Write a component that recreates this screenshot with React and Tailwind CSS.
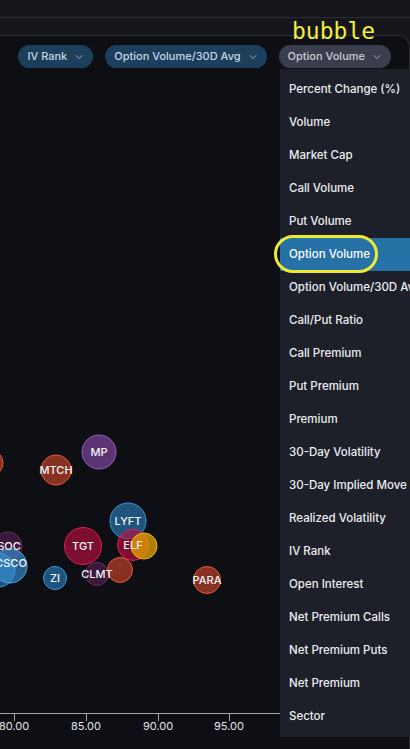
import React from 'react';
import { ChevronDown } from 'lucide-react';

const metrics = [
  'Percent Change (%)',
  'Volume',
  'Market Cap',
  'Call Volume',
  'Put Volume',
  'Option Volume',
  'Option Volume/30D Avg',
  'Call/Put Ratio',
  'Call Premium',
  'Put Premium',
  'Premium',
  '30-Day Volatility',
  '30-Day Implied Move',
  'Realized Volatility',
  'IV Rank',
  'Open Interest',
  'Net Premium Calls',
  'Net Premium Puts',
  'Net Premium',
  'Sector',
];

const palette = {
  orange: { fill: '#d9482b', op: 0.6, stroke: '#ea5a35' },
  purple: { fill: '#8e4fb0', op: 0.6, stroke: '#9c5bc0' },
  blue: { fill: '#2a7ab8', op: 0.65, stroke: '#3c95d8' },
  crimson: { fill: '#b8103f', op: 0.65, stroke: '#e01d55' },
  yellow: { fill: '#e5a500', op: 0.75, stroke: '#f0b800' },
  plum: { fill: '#5a1f55', op: 0.6, stroke: '#6a2a60' },
  sky: { fill: '#3a9ae0', op: 0.6, stroke: '#4aa8e8' },
};

// page coordinates (svg viewBox is offset to match)
const bubbles = [
  { x: -10, y: 463, r: 13, c: 'orange' },
  { x: 99, y: 452, r: 17, c: 'purple', label: 'MP' },
  { x: 56, y: 470, r: 15, c: 'orange', label: 'MTCH' },
  { x: 128, y: 521, r: 18, c: 'blue', label: 'LYFT' },
  { x: 83, y: 546, r: 18.5, c: 'crimson', label: 'TGT' },
  { x: 133, y: 545, r: 15.5, c: 'crimson', label: 'ELF' },
  { x: 144, y: 546, r: 13, c: 'yellow' },
  { x: 97, y: 574, r: 11.5, c: 'plum', label: 'CLMT' },
  { x: 120, y: 570, r: 12.5, c: 'orange' },
  { x: 55, y: 578, r: 11.5, c: 'blue', label: 'ZI' },
  { x: 207, y: 580, r: 13.5, c: 'orange', label: 'PARA' },
  { x: 8, y: 546, r: 14, c: 'plum', label: 'SOC', lx: 9 },
  { x: -2, y: 570, r: 17, c: 'blue' },
  { x: 10, y: 566, r: 17, c: 'sky', label: 'CSCO', lx: 11, ly: 563 },
];

const ticks = [
  { x: 14, t: '80.00' },
  { x: 86, t: '85.00' },
  { x: 158, t: '90.00' },
  { x: 229, t: '95.00' },
];

function Pill({ label, gray }) {
  return (
    <div
      className={`flex h-[23px] shrink-0 items-center gap-[6px] whitespace-nowrap rounded-full pl-[9px] pr-[8px] text-[11px] font-medium ${
        gray ? 'bg-[#3b3e4d] text-[#c9ccd6]' : 'bg-[#1c3f5c] text-[#c6d5e4]'
      }`}
    >
      <span>{label}</span>
      <ChevronDown size={12} strokeWidth={2} className="shrink-0 text-[#a3adb8]" />
    </div>
  );
}

export default function App() {
  return (
    <div className="relative h-[749px] w-[410px] overflow-hidden bg-[#15161b] font-['Inter',sans-serif]">
      <div className="h-[18px] border-b border-[#2c2d33]" />
      <div className="h-[17px]" />
      <div className="relative h-[714px] rounded-tr-[12px] border-t border-r border-[#2c2d33] bg-[#0e0f14]">
        <div className="flex justify-end gap-3 pr-[18px] pt-[9px]">
          <Pill label="IV Rank" />
          <Pill label="Option Volume/30D Avg" />
          <Pill label="Option Volume" gray />
        </div>

        <svg width="410" height="681" viewBox="0 68 410 681" className="block">
          {bubbles.map((b, i) => {
            const p = palette[b.c];
            return (
              <circle
                key={i}
                cx={b.x}
                cy={b.y}
                r={b.r}
                fill={p.fill}
                fillOpacity={p.op}
                stroke={p.stroke}
                strokeWidth="1"
              />
            );
          })}
          {bubbles
            .filter((b) => b.label)
            .map((b) => (
              <text
                key={b.label}
                x={b.lx ?? b.x}
                y={(b.ly ?? b.y) + 4}
                textAnchor="middle"
                fill="#f4f4f6"
                fontSize="11"
                fontWeight="500"
                fontFamily="Inter, sans-serif"
              >
                {b.label}
              </text>
            ))}
          <line x1="0" y1="713.5" x2="280" y2="713.5" stroke="#9ea2ac" strokeWidth="1" />
          {ticks.map((t) => (
            <g key={t.t}>
              <line x1={t.x + 0.5} y1="713" x2={t.x + 0.5} y2="721" stroke="#9ea2ac" strokeWidth="1" />
              <text x={t.x} y="730" textAnchor="middle" fill="#e2e4e8" fontSize="11" fontFamily="Inter, sans-serif">
                {t.t}
              </text>
            </g>
          ))}
        </svg>

        <div className="absolute left-[280px] top-[33px] w-[140px] bg-[#1e2029] pt-[4px] pb-[4px]">
          {metrics.map((m) => (
            <div
              key={m}
              className={`flex h-[33px] items-center whitespace-nowrap pl-[9px] text-[11.5px] font-medium ${
                m === 'Option Volume' ? 'bg-[#2671a6] text-white' : 'text-[#eceef2]'
              }`}
            >
              {m}
            </div>
          ))}
        </div>
      </div>

      <div className="absolute left-[292px] top-[20px] font-['DejaVu_Sans_Mono',monospace] text-[23px] leading-none text-[#f2ee3a]">
        bubble
      </div>
      <div className="absolute left-[274px] top-[235px] h-[38px] w-[104px] rounded-full border-[3px] border-[#eeea34]" />
    </div>
  );
}
